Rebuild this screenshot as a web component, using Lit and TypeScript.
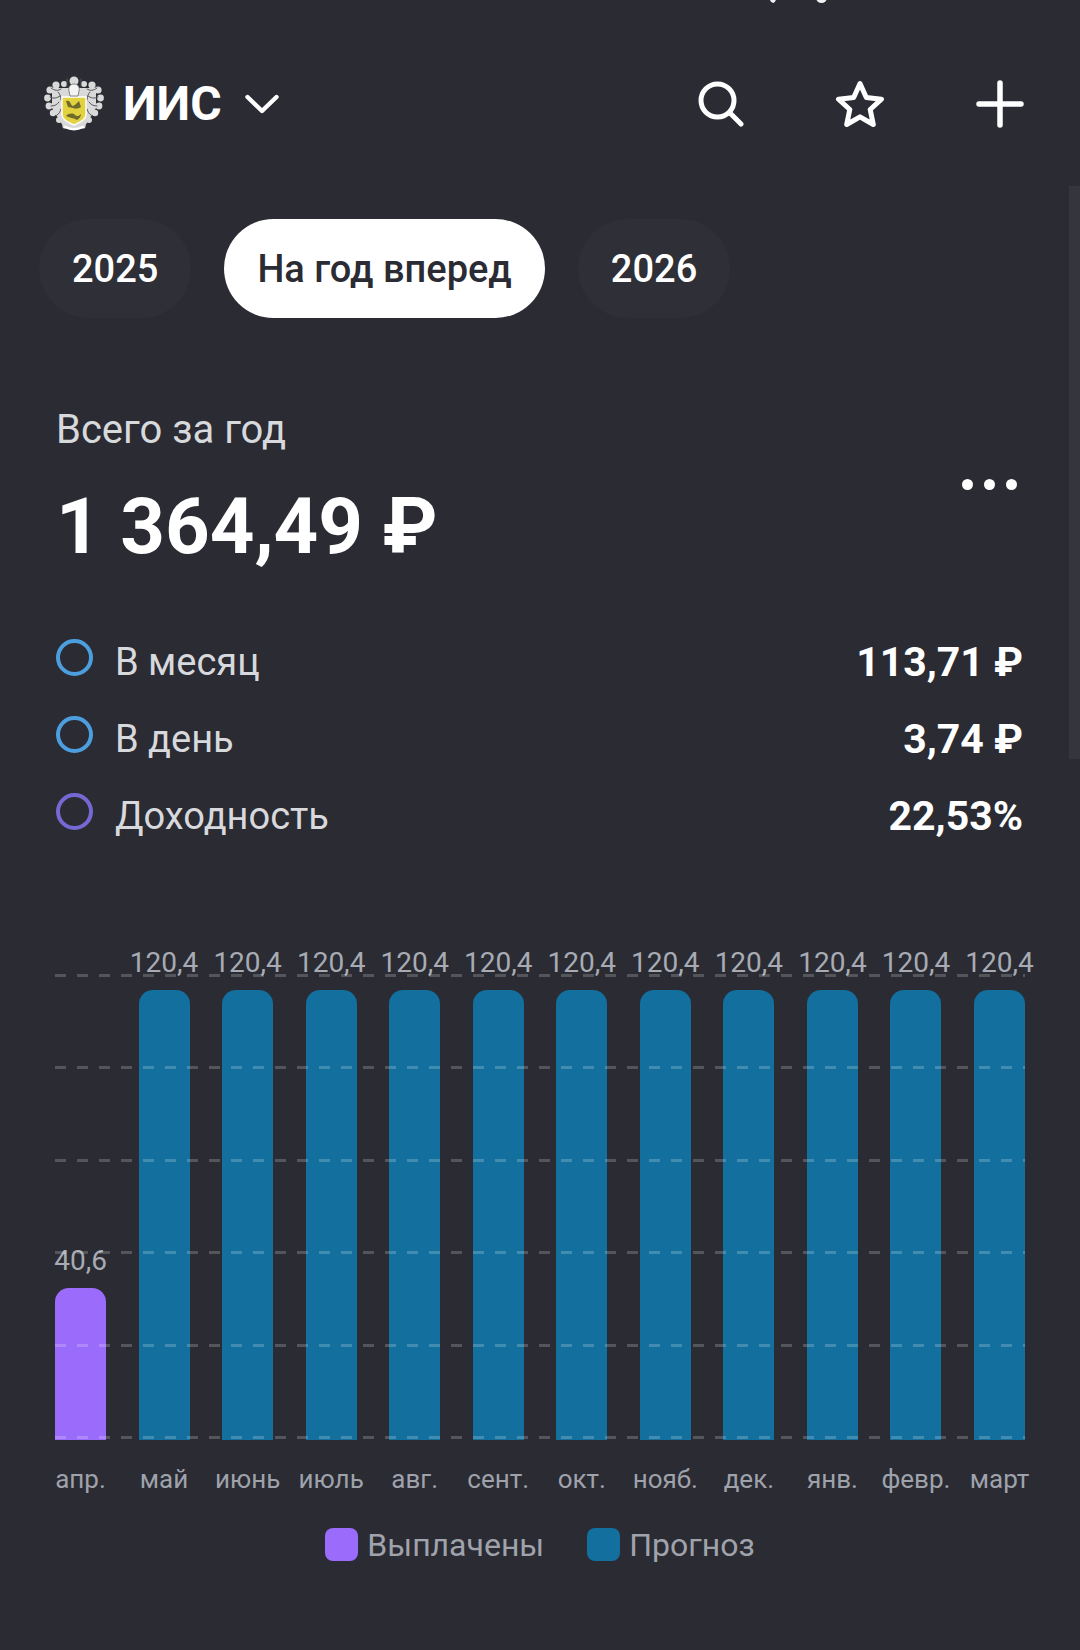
import { LitElement, html, css, svg } from 'lit';
import { customElement } from 'lit/decorators.js';

const MONTHS = [
  { name: 'апр.', value: 40.6, paid: true },
  { name: 'май', value: 120.4 },
  { name: 'июнь', value: 120.4 },
  { name: 'июль', value: 120.4 },
  { name: 'авг.', value: 120.4 },
  { name: 'сент.', value: 120.4 },
  { name: 'окт.', value: 120.4 },
  { name: 'нояб.', value: 120.4 },
  { name: 'дек.', value: 120.4 },
  { name: 'янв.', value: 120.4 },
  { name: 'февр.', value: 120.4 },
  { name: 'март', value: 120.4 },
];

const STATS = [
  { label: 'В месяц', value: '113,71 ₽', ring: 'blue' },
  { label: 'В день', value: '3,74 ₽', ring: 'blue' },
  { label: 'Доходность', value: '22,53%', ring: 'violet' },
];

// px of bar per unit of value
const SCALE = 450 / 120.4;

const logo = svg`
  <svg class="logo" viewBox="0 0 60 56" width="60" height="56" fill="none">
    <g fill="#d9d9d9">
      <circle cx="30" cy="5" r="4.5" />
      <circle cx="20" cy="8" r="3" /><circle cx="40" cy="8" r="3" />
      <circle cx="12" cy="9" r="3.6" /><circle cx="48" cy="9" r="3.6" />
      <circle cx="6" cy="14" r="3.6" /><circle cx="54" cy="14" r="3.6" />
      <circle cx="3.5" cy="22" r="3.4" /><circle cx="56.5" cy="22" r="3.4" />
      <circle cx="5" cy="30" r="3.4" /><circle cx="55" cy="30" r="3.4" />
      <circle cx="9" cy="37" r="3.2" /><circle cx="51" cy="37" r="3.2" />
      <circle cx="15" cy="44" r="3" /><circle cx="45" cy="44" r="3" />
      <circle cx="21" cy="50" r="2.6" /><circle cx="39" cy="50" r="2.6" />
      <path d="M8 12h44v20L41 50 30 54 19 50 8 32z" />
    </g>
    <g stroke="#55565c" stroke-width="1" stroke-linecap="round">
      <path d="M7 12c4 3 7 3 10 1M6 21c4 2 7 1 10-1M7 30c3 0 6-1 8-4M13 39c2-1 3-3 4-6" />
      <path d="M53 12c-4 3-7 3-10 1M54 21c-4 2-7 1-10-1M53 30c-3 0-6-1-8-4M47 39c-2-1-3-3-4-6" />
      <path d="M23 3v8M37 3v8M14 16c2 2 3 5 3 8M46 16c-2 2-3 5-3 8" />
    </g>
    <path d="M18 21h24v17c0 6-6 8-12 11-6-3-12-5-12-11z" fill="#e3d23f" stroke="#fff" stroke-width="1.4" />
    <path d="M22 25c2-1 4 0 5 3s3 2 5 0l3-3 2 6c-3 2-6 2-8 1l-5-1zM22 40c3-3 7-3 9-1s4 1 6-1c0 3-2 5-4 6-3-2-7-2-11-4z" fill="#6d6a2c" />
    <path d="M30 8c-4 0-6 3-5 7l1 5h8l1-5c1-4-1-7-5-7z" fill="#f4f4f4" stroke="#6a6b70" stroke-width=".8" />
    <path d="M21 51c6 3 12 3 18 0" stroke="#fff" stroke-width="2.4" stroke-linecap="round" />
  </svg>
`;

@customElement('app-root')
export class AppRoot extends LitElement {
  static styles = css`
    :host {
      display: block;
      position: relative;
      width: 1080px;
      height: 1650px;
      overflow: hidden;
      background: #2a2b33;
      color: #fff;
      font-family: Roboto, 'Liberation Sans', sans-serif;
    }
    .status {
      display: flex;
      gap: 39px;
      height: 4px;
      padding-left: 772px;
      overflow: hidden;
    }
    .status i {
      display: block;
      width: 11px;
      height: 11px;
      margin-top: -8px;
      border-radius: 50%;
      background: #f0f0f0;
    }
    .status i:first-child {
      width: 5px;
      border-radius: 2px;
      transform: rotate(30deg);
    }
    header {
      display: flex;
      align-items: center;
      height: 60px;
      margin-top: 70px;
      padding: 0 56px 0 44px;
    }
    .logo {
      flex: none;
      margin-right: 19px;
    }
    h1 {
      margin: 0;
      font-size: 48px;
      line-height: 60px;
      font-weight: 700;
    }
    .chevron {
      margin-left: 23px;
    }
    .actions {
      display: flex;
      align-items: center;
      margin-left: auto;
    }
    .actions svg {
      display: block;
    }
    .actions svg + svg {
      margin-left: 91px;
    }
    .pills {
      display: flex;
      gap: 33px;
      margin-top: 85px;
      padding-left: 39px;
    }
    .pill {
      display: flex;
      align-items: center;
      height: 99px;
      padding: 0 33px;
      border-radius: 50px;
      background: #2e2f37;
      font-size: 38px;
      font-weight: 500;
    }
    .pill.active {
      background: #fff;
      color: #2a2b33;
    }
    .summary {
      display: flex;
      justify-content: space-between;
      margin-top: 88px;
      padding: 0 57px 0 56px;
    }
    .caption {
      font-size: 40px;
      line-height: 48px;
      color: #d8d9dc;
    }
    .total {
      margin-top: 28px;
      font-size: 78px;
      line-height: 90px;
      font-weight: 700;
    }
    .dots {
      display: flex;
      gap: 11px;
      margin: 73px 6px 0 0;
    }
    .dots i {
      width: 11px;
      height: 11px;
      border-radius: 50%;
      background: #fff;
    }
    .stats {
      margin-top: 52px;
      padding: 0 57px 0 56px;
    }
    .stat {
      display: flex;
      height: 77px;
      line-height: 77px;
    }
    .ring {
      flex: none;
      box-sizing: border-box;
      width: 37px;
      height: 37px;
      margin: 15px 22px 0 0;
      border: 4.5px solid #4d9ede;
      border-radius: 50%;
    }
    .ring.violet {
      border-color: #7668d3;
    }
    .stat-label {
      font-size: 38px;
      color: #d8d9dc;
    }
    .stat-value {
      margin-left: auto;
      font-size: 41px;
      font-weight: 700;
    }
    .plot {
      position: relative;
      height: 500px;
      margin: 85px 55px 0;
    }
    .columns {
      display: grid;
      grid-template-columns: repeat(12, 1fr);
      column-gap: 32.5px;
      height: 100%;
    }
    .col {
      display: flex;
      flex-direction: column;
      justify-content: flex-end;
      align-items: center;
      min-width: 0;
    }
    .amount {
      margin-bottom: 11px;
      font-size: 28px;
      line-height: 33px;
      white-space: nowrap;
      color: #a8abb3;
    }
    .bar {
      align-self: stretch;
      border-radius: 14px 14px 0 0;
      background: #126f9e;
    }
    .bar.paid {
      background: #9b6bfb;
    }
    .lines {
      position: absolute;
      inset: 34px 0 1px;
      display: flex;
      flex-direction: column;
      justify-content: space-between;
      pointer-events: none;
    }
    .lines i {
      display: block;
      height: 3px;
      background: repeating-linear-gradient(90deg, rgba(255, 255, 255, 0.2) 0 11px, transparent 11px 22px);
    }
    .months {
      display: grid;
      grid-template-columns: repeat(12, 1fr);
      column-gap: 32.5px;
      margin: 24px 55px 0;
    }
    .month {
      display: flex;
      justify-content: center;
      min-width: 0;
      font-size: 26px;
      line-height: 30px;
      white-space: nowrap;
      color: #9fa2ab;
    }
    .legend {
      display: flex;
      justify-content: center;
      gap: 43px;
      margin-top: 34px;
    }
    .legend-item {
      display: flex;
      align-items: center;
      gap: 9px;
      height: 33px;
      font-size: 32px;
      color: #a0a3ab;
    }
    .swatch {
      width: 33px;
      height: 33px;
      border-radius: 8px;
      background: #126f9e;
    }
    .swatch.paid {
      background: #9b6bfb;
    }
    .scrollbar {
      position: absolute;
      top: 186px;
      right: 0;
      width: 11px;
      height: 573px;
      background: #34353d;
    }
  `;

  render() {
    return html`
      <div class="status"><i></i><i></i></div>
      <header>
        ${logo}
        <h1>ИИС</h1>
        <svg class="chevron" width="34" height="20" viewBox="0 0 34 20" fill="none" stroke="#fff" stroke-width="4.4" stroke-linecap="round" stroke-linejoin="round">
          <path d="M2.5 3 17 17 31.5 3" />
        </svg>
        <div class="actions">
          <svg width="46" height="46" viewBox="0 0 46 46" fill="none" stroke="#fff" stroke-width="5" stroke-linecap="round">
            <circle cx="19.5" cy="19.5" r="16.5" />
            <path d="M31.5 31.5 43 43" />
          </svg>
          <svg width="50" height="48" viewBox="0 0 50 48" fill="none" stroke="#fff" stroke-width="5" stroke-linejoin="round">
            <path d="M25 3.5 31.3 17.5 46.5 19.2 35.2 29.5 38.3 44.5 25 36.8 11.7 44.5 14.8 29.5 3.5 19.2 18.7 17.5z" />
          </svg>
          <svg width="48" height="48" viewBox="0 0 48 48" fill="none" stroke="#fff" stroke-width="5.5" stroke-linecap="round">
            <path d="M24 3v42M3 24h42" />
          </svg>
        </div>
      </header>

      <div class="pills">
        <div class="pill">2025</div>
        <div class="pill active">На год вперед</div>
        <div class="pill">2026</div>
      </div>

      <div class="summary">
        <div>
          <div class="caption">Всего за год</div>
          <div class="total">1 364,49 ₽</div>
        </div>
        <div class="dots"><i></i><i></i><i></i></div>
      </div>

      <div class="stats">
        ${STATS.map(
          (s) => html`
            <div class="stat">
              <span class="ring ${s.ring}"></span>
              <span class="stat-label">${s.label}</span>
              <span class="stat-value">${s.value}</span>
            </div>
          `
        )}
      </div>

      <div class="plot">
        <div class="columns">
          ${MONTHS.map(
            (m) => html`
              <div class="col">
                <div class="amount">${m.value.toFixed(1).replace('.', ',')}</div>
                <div class="bar ${m.paid ? 'paid' : ''}" style="height:${m.value * SCALE}px"></div>
              </div>
            `
          )}
        </div>
        <div class="lines"><i></i><i></i><i></i><i></i><i></i><i></i></div>
      </div>
      <div class="months">
        ${MONTHS.map((m) => html`<div class="month">${m.name}</div>`)}
      </div>

      <div class="legend">
        <div class="legend-item"><span class="swatch paid"></span>Выплачены</div>
        <div class="legend-item"><span class="swatch"></span>Прогноз</div>
      </div>

      <div class="scrollbar"></div>
    `;
  }
}
